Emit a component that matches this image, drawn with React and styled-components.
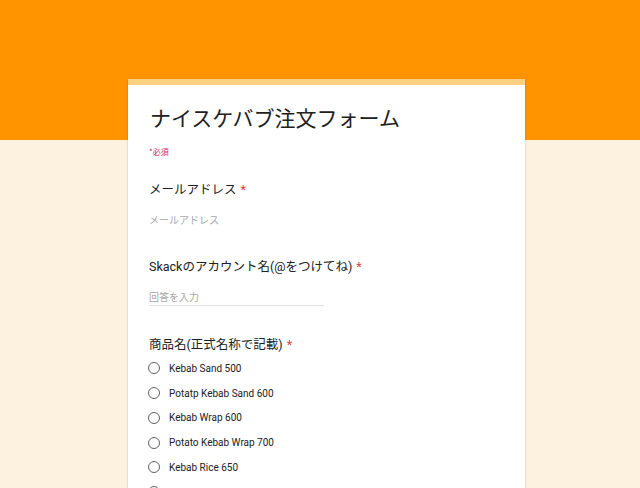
import React from "react";
import styled, { createGlobalStyle } from "styled-components";

const Global = createGlobalStyle`
  html, body { margin: 0; padding: 0; }
  body {
    font-family: Roboto, "Noto Sans CJK JP", sans-serif;
    background: #fdf2e0;
  }
`;

const Page = styled.div`
  width: 640px;
  height: 488px;
  overflow: hidden;
  background: linear-gradient(to bottom, #ff9400 0, #ff9400 140px, #fdf2e0 140px);
  padding-top: 79px;
  box-sizing: border-box;
`;

const Card = styled.div`
  margin-left: 128px;
  width: 397px;
  min-height: 500px;
  background: #fff;
  border-top: 6px solid #ffd080;
  box-shadow: 0 1px 2px rgba(0, 0, 0, 0.18), 0 0 1px rgba(0, 0, 0, 0.1);
  padding: 17px 21px 0;
  box-sizing: border-box;
  display: flex;
  flex-direction: column;
`;

const Title = styled.h1`
  margin: 0 0 0 1px;
  font-family: "Noto Sans CJK JP", sans-serif;
  font-weight: 400;
  font-size: 21px;
  line-height: 30px;
  color: #212121;
`;

const RequiredNote = styled.div`
  margin-top: 14px;
  font-family: "Noto Sans CJK JP", sans-serif;
  font-size: 8px;
  line-height: 12px;
  color: #e0245e;
`;

const Label = styled.div`
  margin-top: ${(p) => p.$gap}px;
  font-family: Roboto, "Noto Sans CJK JP", sans-serif;
  font-size: 12.5px;
  line-height: 18px;
  color: #202124;
`;

const Star = styled.span`
  color: #db4437;
  margin-left: 4px;
`;

const Placeholder = styled.div`
  margin-top: 15px;
  width: ${(p) => (p.$underline ? "175px" : "auto")};
  font-family: Roboto, "Noto Sans CJK JP", sans-serif;
  font-size: 10px;
  line-height: 14px;
  color: #a8a8a8;
  border-bottom: ${(p) => (p.$underline ? "1px solid #e0e0e0" : "none")};
`;

const Options = styled.div`
  margin-top: 2px;
  display: flex;
  flex-direction: column;
`;

const Option = styled.label`
  height: 24.75px;
  display: flex;
  align-items: center;
  gap: 9px;
  font-family: Roboto, sans-serif;
  font-size: 10px;
  color: #212121;
`;

const Radio = styled.span`
  width: 12px;
  height: 12px;
  box-sizing: border-box;
  border: 1.6px solid #616161;
  border-radius: 50%;
  flex: none;
  margin-left: -1px;
`;

const items = [
  "Kebab Sand 500",
  "Potatp Kebab Sand 600",
  "Kebab Wrap 600",
  "Potato Kebab Wrap 700",
  "Kebab Rice 650",
  "Potato Kebab Rice 750",
];

export default function App() {
  return (
    <>
      <Global />
      <Page>
        <Card>
          <Title>ナイスケバブ注文フォーム</Title>
          <RequiredNote>*必須</RequiredNote>
          <Label $gap={23}>
            メールアドレス<Star>*</Star>
          </Label>
          <Placeholder>メールアドレス</Placeholder>
          <Label $gap={30}>
            Skackのアカウント名(@をつけてね)<Star>*</Star>
          </Label>
          <Placeholder $underline>回答を入力</Placeholder>
          <Label $gap={30}>
            商品名(正式名称で記載)<Star>*</Star>
          </Label>
          <Options>
            {items.map((t) => (
              <Option key={t}>
                <Radio />
                {t}
              </Option>
            ))}
          </Options>
        </Card>
      </Page>
    </>
  );
}
